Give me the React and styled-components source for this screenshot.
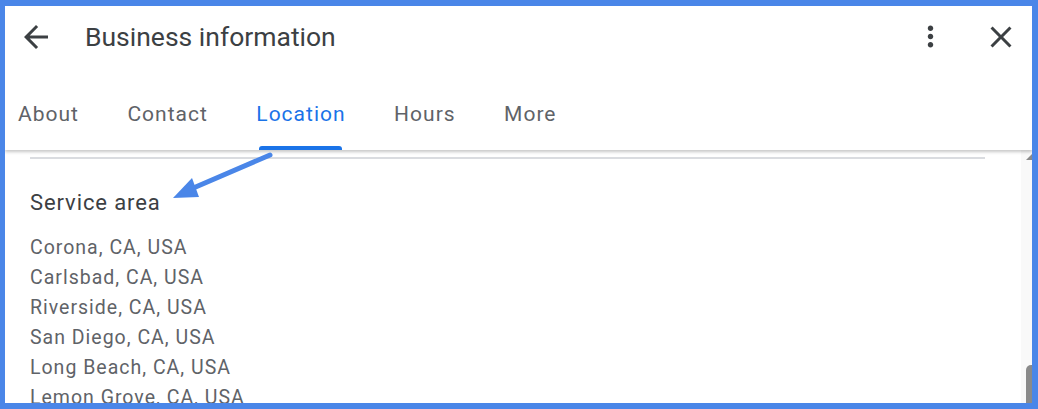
import React from "react";
import styled, { createGlobalStyle } from "styled-components";

const GlobalStyle = createGlobalStyle`
  html, body { margin: 0; padding: 0; background: #fff; }
  body { font-family: Roboto, "Noto Sans", Arial, sans-serif; }
`;

const Frame = styled.div`
  position: relative;
  box-sizing: border-box;
  width: 1038px;
  height: 409px;
  border: 6px solid #4a86e8;
  border-left-width: 5px;
  background: #fff;
  display: flex;
  flex-direction: column;
  overflow: hidden;
`;

const Header = styled.header`
  position: relative;
  z-index: 2;
  background: #fff;
  box-shadow: 0 2px 3px rgba(0, 0, 0, 0.22);
`;

const TopBar = styled.div`
  display: flex;
  align-items: center;
  height: 61px;
  padding: 0 13px 0 13px;
`;

const IconButton = styled.button`
  display: flex;
  align-items: center;
  justify-content: center;
  width: ${(p) => p.size || 36}px;
  height: ${(p) => p.size || 36}px;
  padding: 0;
  margin: ${(p) => p.margin || "0"};
  border: none;
  background: none;
  color: #3c4043;
  svg { width: 100%; height: 100%; fill: currentColor; }
`;

const Title = styled.h1`
  flex: 1;
  margin: 0 0 0 31px;
  font-size: 26.5px;
  font-weight: 400;
  color: #3c4043;
`;

const Tabs = styled.nav`
  display: flex;
  height: 83px;
  padding-left: 13px;
  gap: 48.5px;
`;

const Tab = styled.div`
  position: relative;
  padding-top: 34px;
  font-size: 21px;
  line-height: 26px;
  letter-spacing: 1px;
  color: ${(p) => (p.active ? "#1a73e8" : "#5f6368")};
  &::after {
    content: "";
    display: ${(p) => (p.active ? "block" : "none")};
    position: absolute;
    left: 3px;
    right: 4px;
    bottom: 0;
    height: 4px;
    border-radius: 3px 3px 0 0;
    background: #1a73e8;
  }
`;

const Body = styled.div`
  flex: 1;
  display: flex;
  min-height: 0;
`;

const Content = styled.main`
  flex: 1;
  padding: 7px 36px 0 25px;
`;

const Divider = styled.hr`
  margin: 0;
  border: none;
  height: 2px;
  background: #dadce0;
`;

const SectionTitle = styled.h2`
  margin: 30px 0 16px;
  font-size: 22px;
  line-height: 28px;
  font-weight: 400;
  letter-spacing: 0.9px;
  color: #3c4043;
`;

const PlaceList = styled.ul`
  margin: 0;
  padding: 0;
  list-style: none;
`;

const Place = styled.li`
  font-size: 19.5px;
  line-height: 30px;
  letter-spacing: 1px;
  color: #5f6368;
  white-space: nowrap;
`;

const Scrollbar = styled.div`
  position: relative;
  width: 11px;
  background: #f9f9f9;
`;

const ScrollUp = styled.div`
  position: absolute;
  top: 4px;
  right: 0;
  width: 0;
  height: 0;
  border-left: 6px solid transparent;
  border-bottom: 6px solid #8a8a8a;
`;

const Thumb = styled.div`
  position: absolute;
  top: 215px;
  bottom: 0;
  right: 0;
  width: 6px;
  border-radius: 5px 0 0 0;
  background: #8a8a8a;
`;

const Annotation = styled.svg`
  position: absolute;
  left: 0;
  top: 0;
  z-index: 3;
  pointer-events: none;
`;

const places = [
  "Corona, CA, USA",
  "Carlsbad, CA, USA",
  "Riverside, CA, USA",
  "San Diego, CA, USA",
  "Long Beach, CA, USA",
  "Lemon Grove, CA, USA",
];

const tabs = ["About", "Contact", "Location", "Hours", "More"];

export default function App() {
  return (
    <>
      <GlobalStyle />
      <Frame>
        <Header>
          <TopBar>
            <IconButton aria-label="Back">
              <svg viewBox="0 0 24 24">
                <path d="M20 11H7.83l5.59-5.59L12 4l-8 8 8 8 1.41-1.41L7.83 13H20v-2z" />
              </svg>
            </IconButton>
            <Title>Business information</Title>
            <IconButton aria-label="More options" size={33} margin="0 36px 0 0">
              <svg viewBox="0 0 24 24">
                <path d="M12 8c1.1 0 2-.9 2-2s-.9-2-2-2-2 .9-2 2 .9 2 2 2zm0 2c-1.1 0-2 .9-2 2s.9 2 2 2 2-.9 2-2-.9-2-2-2zm0 6c-1.1 0-2 .9-2 2s.9 2 2 2 2-.9 2-2-.9-2-2-2z" />
              </svg>
            </IconButton>
            <IconButton aria-label="Close">
              <svg viewBox="0 0 24 24">
                <path d="M19 6.41L17.59 5 12 10.59 6.41 5 5 6.41 10.59 12 5 17.59 6.41 19 12 13.41 17.59 19 19 17.59 13.41 12z" />
              </svg>
            </IconButton>
          </TopBar>
          <Tabs>
            {tabs.map((t) => (
              <Tab key={t} active={t === "Location"}>
                {t}
              </Tab>
            ))}
          </Tabs>
        </Header>
        <Body>
          <Content>
            <Divider />
            <SectionTitle>Service area</SectionTitle>
            <PlaceList>
              {places.map((p) => (
                <Place key={p}>{p}</Place>
              ))}
            </PlaceList>
          </Content>
          <Scrollbar>
            <ScrollUp />
            <Thumb />
          </Scrollbar>
        </Body>
        <Annotation width="1027" height="397" viewBox="0 0 1027 397">
          <line x1="265" y1="149" x2="186" y2="183" stroke="#4a86e8" strokeWidth="5" strokeLinecap="round" />
          <polygon points="168,192 187,172 194,191" fill="#4a86e8" />
        </Annotation>
      </Frame>
    </>
  );
}
